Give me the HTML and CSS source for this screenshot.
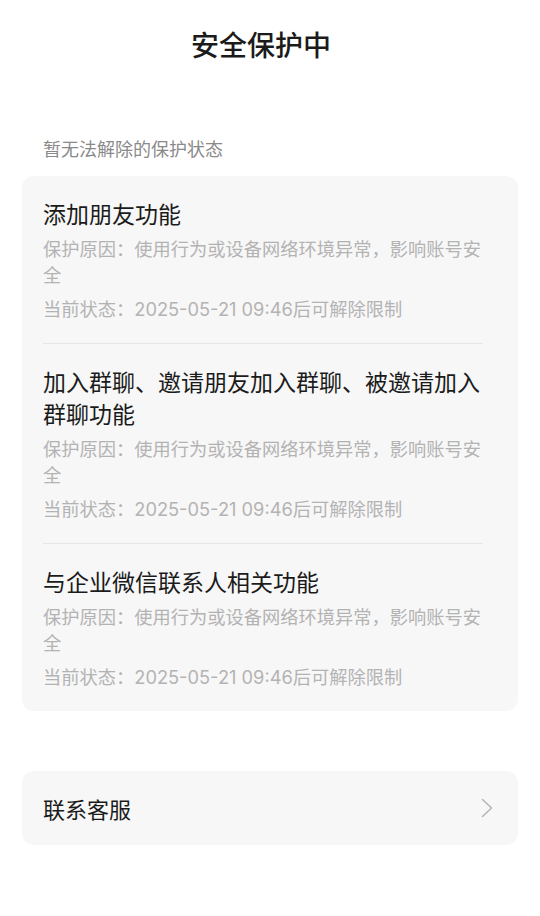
FILE: index.html
```html
<!DOCTYPE html>
<html>
<head>
    <meta charset="utf-8">
    <title>安全保护中</title>
    <link rel="stylesheet" href="styles.css">
</head>
<body>
    <div class="page">
        <h1 class="title">安全保护中</h1>
        <div class="label">暂无法解除的保护状态</div>
        <div class="card">
            <div class="item">
                <div class="item-title">添加朋友功能</div>
                <div class="reason">保护原因：使用行为或设备网络环境异常，影响账号安全</div>
                <div class="status">当前状态：<span class="num">2025-05-21 09:46</span>后可解除限制</div>
            </div>
            <div class="item">
                <div class="item-title">加入群聊、邀请朋友加入群聊、被邀请加入群聊功能</div>
                <div class="reason">保护原因：使用行为或设备网络环境异常，影响账号安全</div>
                <div class="status">当前状态：<span class="num">2025-05-21 09:46</span>后可解除限制</div>
            </div>
            <div class="item">
                <div class="item-title">与企业微信联系人相关功能</div>
                <div class="reason">保护原因：使用行为或设备网络环境异常，影响账号安全</div>
                <div class="status">当前状态：<span class="num">2025-05-21 09:46</span>后可解除限制</div>
            </div>
        </div>
        <div class="link-card">
            <span class="link-text">联系客服</span>
            <svg class="chevron" width="12" height="20" viewBox="0 0 12 20">
                <polyline points="1.5,1.5 10.5,10 1.5,18.5" fill="none" stroke="#b5b5b5" stroke-width="1.6" stroke-linecap="round" stroke-linejoin="round"/>
            </svg>
        </div>
    </div>
</body>
</html>
```

FILE: styles.css
```css
body {
    margin: 0;
    background-color: #fff;
    font-family: "Noto Sans CJK SC", "Noto Sans", sans-serif;
    color: #1b1b1b;
}
.page {
    padding: 0 22px;
}
.title {
    margin: 0;
    height: 88px;
    line-height: 88px;
    padding-right: 18px;
    font-size: 28px;
    font-weight: 500;
    text-align: center;
}
.label {
    margin-top: 47px;
    margin-bottom: 15px;
    padding-left: 21px;
    font-size: 18px;
    line-height: 26px;
    color: #8a8a8a;
}
.card {
    background-color: #f7f7f7;
    border-radius: 12px;
    padding: 0 35px 0 21px;
}
.item {
    padding: 21px 0 22px;
    border-bottom: 1px solid #e6e6e6;
}
.item:last-child {
    border-bottom: none;
}
.item-title {
    font-size: 23px;
    line-height: 32px;
    color: #1b1b1b;
    margin-bottom: 6px;
}
.reason {
    font-size: 18.25px;
    line-height: 26px;
    color: #b3b3b3;
}
.status {
    margin-top: 8px;
    font-size: 18.25px;
    line-height: 26px;
    color: #b3b3b3;
}
.num {
    font-family: Inter, "Noto Sans CJK SC", sans-serif;
    line-height: 1;
}
.link-card {
    margin-top: 60px;
    height: 74px;
    background-color: #f7f7f7;
    border-radius: 12px;
    padding: 0 25px 0 21px;
    display: flex;
    align-items: center;
    justify-content: space-between;
}
.link-text {
    font-size: 22px;
    color: #1b1b1b;
}
```
